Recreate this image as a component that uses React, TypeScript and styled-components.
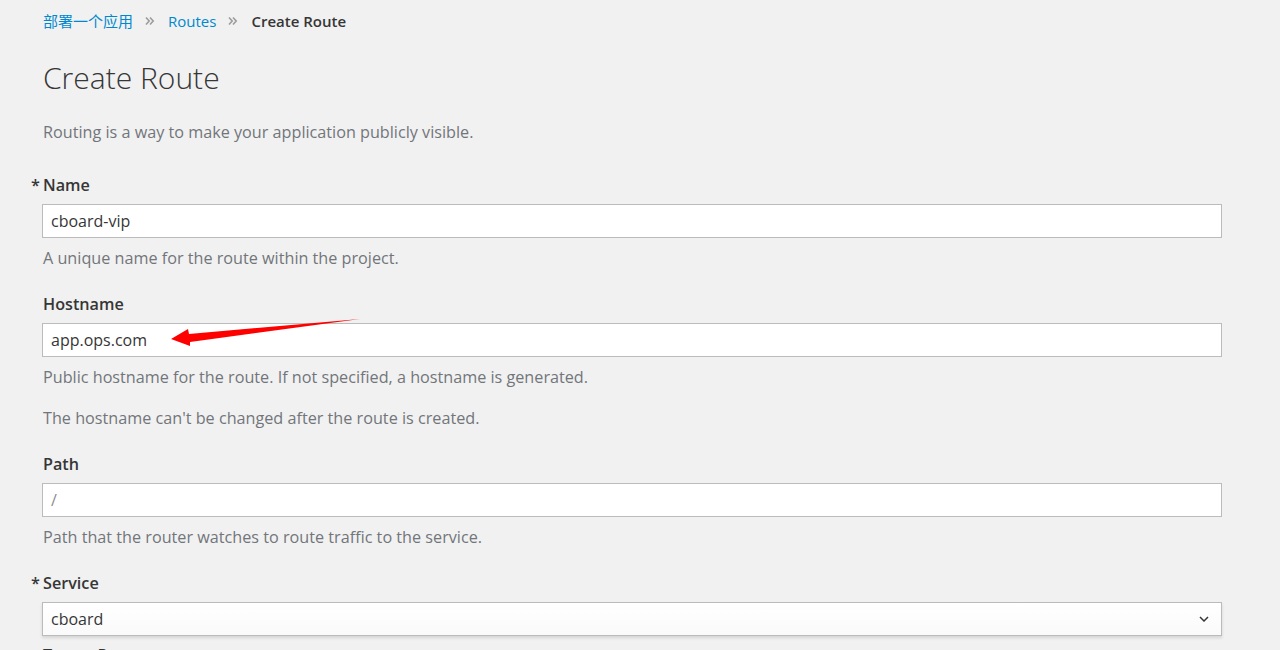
import React from "react";
import styled, { createGlobalStyle } from "styled-components";

const Global = createGlobalStyle`
  html, body { margin: 0; padding: 0; background: #f1f1f1; }
  body { font-family: "Open Sans", "Noto Sans CJK SC", sans-serif; color: #363636; }
  * { box-sizing: border-box; }
`;

const Page = styled.div`
  width: 1280px;
  height: 650px;
  overflow: hidden;
  padding: 11px 58px 0 42px;
`;

const Crumbs = styled.nav`
  display: flex;
  align-items: center;
  height: 20px;
  font-size: 15px;
  line-height: 20px;
  padding-left: 1px;
`;

const CrumbLink = styled.a`
  color: #0088ce;
  text-decoration: none;
`;

const CrumbCurrent = styled.span`
  color: #363636;
  font-weight: 600;
`;

const Sep = styled.span`
  display: inline-flex;
  align-items: center;
  padding: 0 13px 0 12px;
  color: #9c9c9c;
`;

const Title = styled.h1`
  margin: 29px 0 0 0;
  font-size: 30px;
  line-height: 36px;
  font-weight: 300;
  color: #363636;
  padding-left: 1px;
`;

const Lead = styled.p`
  margin: 25px 0 0 0;
  font-size: 16.2px;
  line-height: 22px;
  color: #72767b;
  padding-left: 1px;
`;

const Group = styled.div<{ $gap: number }>`
  margin-top: ${(p) => p.$gap}px;
`;

const Label = styled.label<{ $required?: boolean }>`
  display: block;
  font-size: 16.2px;
  line-height: 22px;
  font-weight: 600;
  color: #363636;
  margin-bottom: 8px;
  padding-left: 1px;
  &::before {
    content: ${(p) => (p.$required ? '"*"' : '""')};
    display: inline-block;
    width: 12px;
    margin-left: -12px;
  }
`;

const FieldWrap = styled.div`
  position: relative;
  width: 1180px;
`;

const Input = styled.input`
  display: block;
  width: 100%;
  height: 34px;
  border: 1px solid #bbbbbb;
  background: #fff;
  padding: 0 8px;
  font-family: "Open Sans", sans-serif;
  font-size: 16px;
  color: #363636;
  outline: none;
  border-radius: 0;
  &::placeholder { color: #8b8d8f; }
`;

const SelectBox = styled.div`
  display: flex;
  align-items: center;
  justify-content: space-between;
  width: 1180px;
  height: 34px;
  border: 1px solid #bbbbbb;
  background: linear-gradient(#ffffff, #fafafa);
  box-shadow: 0 2px 3px rgba(3, 3, 3, 0.12);
  padding: 0 12px 0 8px;
  font-size: 16px;
  color: #363636;
`;

const Help = styled.p<{ $top?: number }>`
  margin: ${(p) => p.$top ?? 9}px 0 0 0;
  font-size: 16.2px;
  line-height: 22px;
  color: #72767b;
  padding-left: 1px;
`;

const Annotation = styled.svg`
  position: absolute;
  left: 0;
  top: 0;
  pointer-events: none;
  overflow: visible;
`;

const DoubleAngle = () => (
  <svg width="10" height="10" viewBox="0 0 10 10">
    <path d="M1 1.5 L4.2 5 L1 8.5 M5 1.5 L8.2 5 L5 8.5" fill="none" stroke="#9c9c9c" strokeWidth="1.6" />
  </svg>
);

const Chevron = () => (
  <svg width="10" height="6" viewBox="0 0 10 6">
    <path d="M1 1 L5 5 L9 1" fill="none" stroke="#363636" strokeWidth="1.5" />
  </svg>
);

export default function App() {
  return (
    <>
      <Global />
      <Page>
        <Crumbs>
          <CrumbLink href="#">部署一个应用</CrumbLink>
          <Sep><DoubleAngle /></Sep>
          <CrumbLink href="#">Routes</CrumbLink>
          <Sep><DoubleAngle /></Sep>
          <CrumbCurrent>Create Route</CrumbCurrent>
        </Crumbs>
        <Title>Create Route</Title>
        <Lead>Routing is a way to make your application publicly visible.</Lead>

        <Group $gap={31}>
          <Label $required>Name</Label>
          <FieldWrap>
            <Input defaultValue="cboard-vip" />
          </FieldWrap>
          <Help>A unique name for the route within the project.</Help>
        </Group>

        <Group $gap={24}>
          <Label>Hostname</Label>
          <FieldWrap>
            <Input defaultValue="app.ops.com" />
            <Annotation width="1180" height="34">
              <polygon
                points="129,16 146,6 147,11 318,-4 148,19 148,23"
                fill="#ff0000"
              />
            </Annotation>
          </FieldWrap>
          <Help>Public hostname for the route. If not specified, a hostname is generated.</Help>
          <Help $top={19}>The hostname can't be changed after the route is created.</Help>
        </Group>

        <Group $gap={24}>
          <Label>Path</Label>
          <FieldWrap>
            <Input placeholder="/" />
          </FieldWrap>
          <Help>Path that the router watches to route traffic to the service.</Help>
        </Group>

        <Group $gap={24}>
          <Label $required>Service</Label>
          <SelectBox>
            <span>cboard</span>
            <Chevron />
          </SelectBox>
        </Group>

        <Group $gap={8}>
          <Label>Target Port</Label>
        </Group>
      </Page>
    </>
  );
}
